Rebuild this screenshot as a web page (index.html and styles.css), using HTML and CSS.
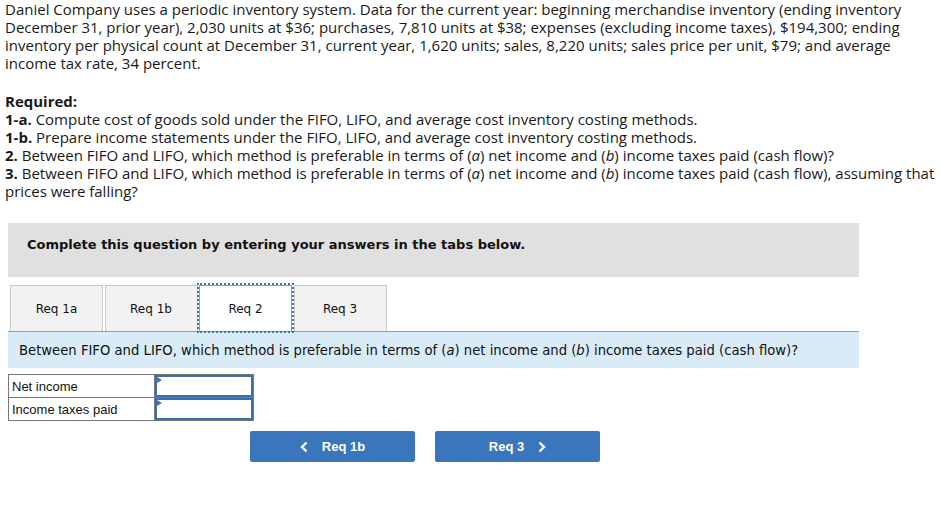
FILE: index.html
```html
<!DOCTYPE html>
<html>
<head>
<meta charset="utf-8">
<link rel="stylesheet" href="styles.css">
</head>
<body>
<div class="intro">
<p class="para">Daniel Company uses a periodic inventory system. Data for the current year: beginning merchandise inventory (ending inventory December 31, prior year), 2,030 units at $36; purchases, 7,810 units at $38; expenses (excluding income taxes), $194,300; ending inventory per physical count at December 31, current year, 1,620 units; sales, 8,220 units; sales price per unit, $79; and average income tax rate, 34 percent.</p>
<p class="para req"><b>Required:</b><br>
<b>1-a.</b> Compute cost of goods sold under the FIFO, LIFO, and average cost inventory costing methods.<br>
<b>1-b.</b> Prepare income statements under the FIFO, LIFO, and average cost inventory costing methods.<br>
<b>2.</b> Between FIFO and LIFO, which method is preferable in terms of (<i>a</i>) net income and (<i>b</i>) income taxes paid (cash flow)?<br>
<b>3.</b> Between FIFO and LIFO, which method is preferable in terms of (<i>a</i>) net income and (<i>b</i>) income taxes paid (cash flow), assuming that prices were falling?</p>
</div>
<div class="widget">
  <div class="banner">Complete this question by entering your answers in the tabs below.</div>
  <div class="tabs">
    <div class="tab">Req 1a</div>
    <div class="tab">Req 1b</div>
    <div class="tab active">Req 2</div>
    <div class="tab">Req 3</div>
  </div>
  <div class="question">Between FIFO and LIFO, which method is preferable in terms of (<i>a</i>) net income and (<i>b</i>) income taxes paid (cash flow)?</div>
  <table class="answers">
    <tr><td class="label">Net income</td><td class="cell"><div class="input"></div></td></tr>
    <tr><td class="label">Income taxes paid</td><td class="cell"><div class="input"></div></td></tr>
  </table>
  <div class="nav">
    <div class="btn"><svg class="chev" width="8" height="12" viewBox="0 0 8 12"><path d="M6.5 1.5 L2 6 L6.5 10.5" fill="none" stroke="#fff" stroke-width="2.4"/></svg><span>Req 1b</span></div>
    <div class="btn"><span>Req 3</span><svg class="chev" width="8" height="12" viewBox="0 0 8 12"><path d="M1.5 1.5 L6 6 L1.5 10.5" fill="none" stroke="#fff" stroke-width="2.4"/></svg></div>
  </div>
</div>
</body>
</html>
```
FILE: styles.css
```css
body {
  margin: 0;
  background: #fff;
  color: #222;
}
.intro {
  padding: 0 5px;
  font-family: "Open Sans", "Liberation Sans", sans-serif;
  font-size: 15px;
  line-height: 18px;
  color: #1a1a1a;
}
.para {
  margin: 0 0 20px 0;
}
.req b {
  font-weight: 700;
}
.widget {
  margin: 23px 0 0 8px;
  width: 851px;
}
.banner {
  background: #e0e0e0;
  height: 54px;
  box-sizing: border-box;
  padding: 14px 0 0 19px;
  font-family: "DejaVu Sans", Verdana, sans-serif;
  font-weight: bold;
  font-size: 13px;
  line-height: 16px;
  color: #111;
}
.tabs {
  display: flex;
  gap: 1.5px;
  margin-top: 8px;
  padding-left: 2px;
  border-bottom: 1px solid #999;
  height: 46px;
}
.tab {
  width: 93px;
  height: 46px;
  box-sizing: border-box;
  background: #f2f2f2;
  border: 1px solid #c8c8c8;
  border-bottom: none;
  display: flex;
  align-items: center;
  justify-content: center;
  font-family: "DejaVu Sans", Verdana, sans-serif;
  font-size: 12px;
  color: #111;
}
.tab.active {
  background: #fff;
  border-color: #999;
  outline: 2px dotted #3a76bb;
  outline-offset: 0;
}
.question {
  background: #daebf8;
  height: 36px;
  box-sizing: border-box;
  padding: 11px 0 0 11px;
  font-family: "DejaVu Sans", Verdana, sans-serif;
  font-size: 13.2px;
  line-height: 16px;
  color: #111;
}
.answers {
  border-collapse: collapse;
  margin-top: 6px;
  font-family: "Liberation Sans", Arial, sans-serif;
  font-size: 13px;
  color: #111;
}
.answers td {
  border: 1px solid #777;
  padding: 0;
  height: 22px;
}
.label {
  width: 146px;
  padding-left: 3px !important;
  box-sizing: border-box;
}
.cell {
  width: 98px;
}
.input {
  height: 22px;
  box-sizing: border-box;
  border: 2px solid #3a6fb0;
  position: relative;
}
.input::before {
  content: "";
  position: absolute;
  left: 0;
  top: 0;
  border-left: 5px solid #3a76bb;
  border-top: 3px solid transparent;
  border-bottom: 3px solid transparent;
}
.nav {
  display: flex;
  gap: 20px;
  margin: 10px 0 0 242px;
}
.btn {
  width: 165px;
  height: 31px;
  background: #3a76bb;
  border-radius: 2px;
  color: #fff;
  display: flex;
  align-items: center;
  justify-content: center;
  gap: 14px;
  font-family: "Liberation Sans", Arial, sans-serif;
  font-weight: bold;
  font-size: 13px;
}
.chev {
  display: block;
}
```
